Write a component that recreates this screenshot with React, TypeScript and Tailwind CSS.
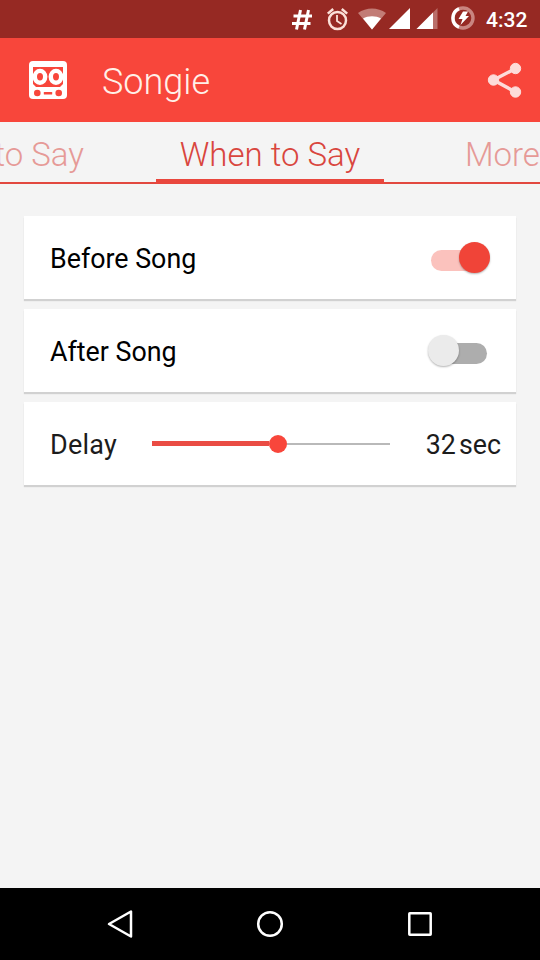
import { useState } from "react";
import clsx from "clsx";

function StatusBar() {
  return (
    <div className="flex h-[38px] shrink-0 items-center bg-[#962923] pl-[291px] text-white">
      <svg width="192" height="38" viewBox="291 0 192 38" className="shrink-0">
        {/* Hash */}
        <path
          d="M300.5 10L296.5 29.500M308.500 10L304.500 29.500M293.5 16H312M292 23.5H310.5"
          stroke="#fff"
          strokeWidth="3"
          fill="none"
        />
        {/* Alarm */}
        <g stroke="#fbe0d8" fill="none" strokeWidth="2.5">
          <circle cx="337.5" cy="20.5" r="8.5" />
          <path d="M337 15V21L341.5 24" strokeWidth="1.8" />
          <path d="M327.8 13.6L333.2 9M347.2 13.6L341.8 9" />
        </g>
        {/* Wifi */}
        <path d="M358 13C366 7 378 7 386 13L372 29.5Z" fill="#c27c76" />
        <path d="M363 18.500C368 15.6 376 15.6 381 18.500L372 29.5Z" fill="#fff" />
        {/* Signal */}
        <path d="M410 8V29H389Z" fill="#fff" />
        <path d="M437.5 8V29H416.5Z" fill="#b96e69" />
        <path d="M433 12.5V29H416.5Z" fill="#fff" />
        {/* Charging */}
        <circle cx="463" cy="18" r="10" fill="none" stroke="#c98580" strokeWidth="3.4" />
        <path d="M459 27.2A10 10 0 0 1 459 8.8" fill="none" stroke="#fff" strokeWidth="3.4" />
        <path d="M463 11.5H468L465.5 16H469L460.5 25L462.5 19H458.5Z" fill="#fff" />
      </svg>
      <span className="ml-[3px] pt-[2px] text-[21px] leading-none font-medium">4:32</span>
    </div>
  );
}

function Logo() {
  return (
    <svg width="38" height="38" viewBox="0 0 38 38">
      <rect width="38" height="38" rx="4" fill="#fff" />
      <path d="M4 6H34V23L31 26H7L4 23Z" fill="#f8463b" />
      <g fill="#f8463b" stroke="#fff" strokeWidth="4.4">
        <ellipse cx="11" cy="15.8" rx="5.2" ry="5.9" />
        <ellipse cx="27" cy="15.8" rx="5.2" ry="5.9" />
      </g>
      <circle cx="8.3" cy="32" r="3.3" fill="#f8463b" />
      <circle cx="29.7" cy="32" r="3.3" fill="#f8463b" />
      <rect x="14.8" y="31" width="8.4" height="2.6" rx="0.5" fill="#f8463b" />
    </svg>
  );
}

function AppBar() {
  return (
    <header className="flex h-[84px] shrink-0 items-center bg-[#f8463b] pr-[17px] pl-[29px]">
      <Logo />
      <h1 className="ml-[35px] flex-1 pt-[4px] text-[36px] leading-none font-light text-[#fff0e8]">Songie</h1>
      <svg width="36" height="36" viewBox="0 0 36 36" fill="#fddcd9" stroke="#fddcd9">
        <path d="M28.5 6.5L6.5 18L28.5 30" fill="none" strokeWidth="3.5" />
        <circle cx="28.5" cy="6.5" r="5.2" />
        <circle cx="6.5" cy="18" r="5.2" />
        <circle cx="28.5" cy="30" r="5.2" />
      </svg>
    </header>
  );
}

function Tabs() {
  return (
    <nav className="flex h-[62px] shrink-0 overflow-hidden text-[33px] leading-[65px] font-light whitespace-nowrap">
      <div className="flex w-[156px] justify-end border-b-2 border-[#e2483f] pr-[72px] text-[#e69a97]">to Say</div>
      <div className="w-[228px] border-b-[5px] border-[#e9473d] text-center text-[#d9463e]">When to Say</div>
      <div className="flex-1 border-b-2 border-[#e2483f] pl-[81px] text-[#e69a97]">More</div>
    </nav>
  );
}

function Switch({ checked, onChange }: { checked: boolean; onChange: () => void }) {
  return (
    <button role="switch" aria-checked={checked} onClick={onChange} className="relative h-[35px] w-[64px]">
      <span
        className={clsx(
          "absolute top-[10px] h-[21px] rounded-full",
          checked ? "left-[4px] w-[52px] bg-[#fbc2bd]" : "left-[8px] w-[52px] bg-[#adadad]"
        )}
      />
      <span
        className={clsx(
          "absolute top-[2px] size-[31px] rounded-full shadow-[0_1px_2px_rgba(0,0,0,0.3)]",
          checked ? "left-[32px] bg-[#f04438]" : "left-[1px] bg-[#ebebeb]"
        )}
      />
    </button>
  );
}

const cardClass = "flex h-[83px] items-center bg-white pl-[26px] shadow-[0_2px_1px_rgba(0,0,0,0.14)]";

export default function App() {
  const [before, setBefore] = useState(true);
  const [after, setAfter] = useState(false);
  const [delay] = useState(32);

  return (
    <div className="flex h-[960px] w-[540px] flex-col overflow-hidden bg-[#f4f4f4] font-[Roboto,sans-serif]">
      <StatusBar />
      <AppBar />
      <Tabs />

      <main className="flex flex-1 flex-col gap-[10px] px-6 pt-8 text-[26.8px] leading-none text-black">
        <div className={clsx(cardClass, "justify-between pr-[25px]")}>
          <span className="pt-[3px]">Before Song</span>
          <Switch checked={before} onChange={() => setBefore(!before)} />
        </div>
        <div className={clsx(cardClass, "justify-between pr-[25px]")}>
          <span className="pt-[3px]">After Song</span>
          <Switch checked={after} onChange={() => setAfter(!after)} />
        </div>
        <div className={clsx(cardClass, "pr-[15px] text-[#1c1c1c]")}>
          <span className="w-[102px] pt-[3px] text-[27px] tracking-[0.2px]">Delay</span>
          {/* Slider */}
          <div className="flex w-[238px] items-center">
            <div className="h-[5px] w-[117px] bg-[#ea4c44]" />
            <div className="size-[18px] rounded-full bg-[#f8463b]" />
            <div className="h-[2px] flex-1 bg-[#b9b9b9]" />
          </div>
          <div className="flex flex-1 justify-end gap-[3px] pt-[3px]">
            <span>{delay}</span>
            <span>sec</span>
          </div>
        </div>
      </main>

      <footer className="flex h-[72px] shrink-0 items-center bg-black pl-[106px]">
        <svg width="330" height="32" viewBox="0 0 330 32" fill="none" stroke="#fff" strokeWidth="2.5">
          <path d="M3 16L25 3.5V28.5Z" strokeLinejoin="round" />
          <circle cx="164" cy="16" r="11.8" />
          <rect x="303.3" y="5.3" width="21.4" height="21.4" rx="0.5" />
        </svg>
      </footer>
    </div>
  );
}
